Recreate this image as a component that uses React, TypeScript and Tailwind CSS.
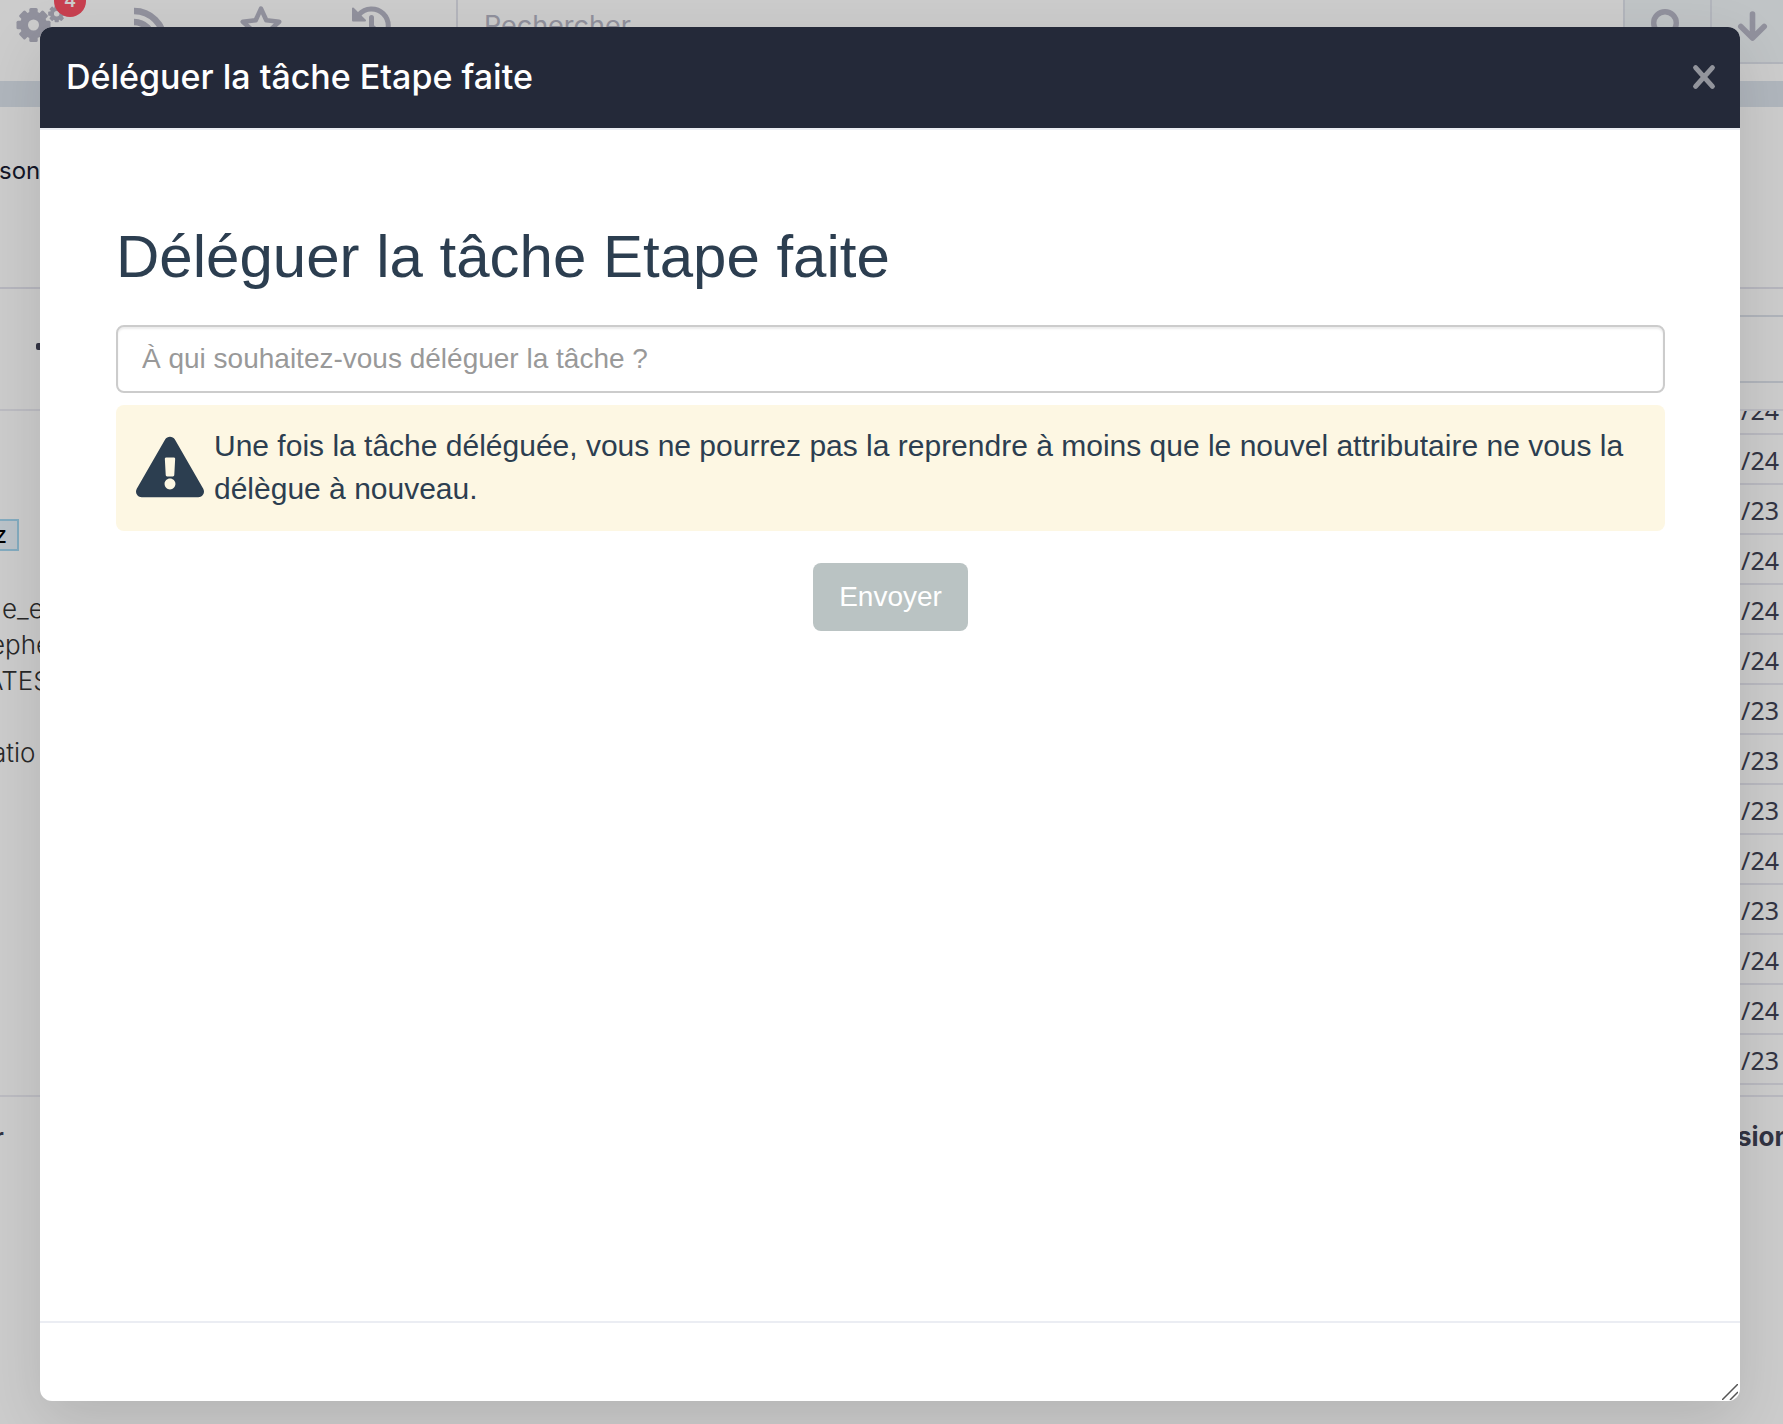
import { FaExclamationTriangle } from "react-icons/fa";

const years = ["24", "24", "23", "24", "24", "24", "23", "23", "23", "24", "23", "24", "24", "23"];
const details = [
  { text: "e_e", className: "pl-0.5" },
  { text: "ephe", className: "-ml-2.5" },
  { text: "ATES", className: "-ml-3.5" },
  { text: "", className: "" },
  { text: "atio", className: "-ml-2" },
];
const teeth = [0, 45, 90, 135, 180, 225, 270, 315];

function Gear() {
  return (
    <>
      <circle r="9.5" fill="none" stroke="currentColor" strokeWidth="8" />
      {teeth.map((angle) => (
        <rect key={angle} x="-4.2" y="-17" width="8.4" height="7" rx="1.5" fill="currentColor" transform={`rotate(${angle})`} />
      ))}
    </>
  );
}

function GearsIcon() {
  return (
    <svg width="50" height="40" viewBox="0 0 50 40" aria-hidden="true">
      <g transform="translate(17.5 21)"><Gear /></g>
      <g transform="translate(40.7 9.7) scale(0.5)"><Gear /></g>
    </svg>
  );
}

function FeedIcon() {
  return (
    <svg width="34" height="40" viewBox="0 0 34 40" fill="none" stroke="currentColor" strokeWidth="6.5" aria-hidden="true">
      <path d="M0 7a30 30 0 0 1 30 30M0 18a19 19 0 0 1 19 19" />
      <circle cx="4.5" cy="33" r="4.5" fill="currentColor" stroke="none" />
    </svg>
  );
}

function StarIcon() {
  return (
    <svg width="42" height="40" viewBox="0 0 42 40" fill="none" stroke="currentColor" strokeWidth="4.6" strokeLinejoin="round" aria-hidden="true">
      <path d="M21 4.6 26.3 16.3 39.2 17.7 29.6 26.4 32.2 38 21 32.6 9.8 38 12.4 26.4 2.8 17.7 15.7 16.3Z" />
    </svg>
  );
}

function HistoryIcon() {
  return (
    <svg width="42" height="40" viewBox="0 0 42 40" fill="none" stroke="currentColor" strokeWidth="5" aria-hidden="true">
      <path d="M9 10.5A16.8 16.8 0 1 1 9 33" />
      <path d="M3 4.5v12h12Z" fill="currentColor" strokeWidth="2" strokeLinejoin="round" />
      <path d="M21.5 13.5v9l6 5" strokeLinecap="round" />
    </svg>
  );
}

function SearchIcon() {
  return (
    <svg width="36" height="40" viewBox="0 0 36 40" fill="none" stroke="currentColor" strokeWidth="5.4" strokeLinecap="round" aria-hidden="true">
      <circle cx="16" cy="19" r="11.3" />
      <path d="m24 28 8 8" />
    </svg>
  );
}

function ArrowDownIcon() {
  return (
    <svg width="32" height="40" viewBox="0 0 32 40" fill="none" stroke="currentColor" strokeWidth="5.6" strokeLinecap="round" strokeLinejoin="round" aria-hidden="true">
      <path d="M16.5 10v22M4.8 22.5 16.5 34l11.7-11.5" />
    </svg>
  );
}

function CloseIcon() {
  return (
    <svg width="24" height="26" viewBox="0 0 24 26" fill="none" stroke="currentColor" strokeWidth="5" strokeLinecap="round" aria-hidden="true">
      <path d="m3.6 3.6 16.8 18.8M20.4 3.6 3.6 22.4" />
    </svg>
  );
}

function TopBar() {
  return (
    <header className="flex h-[81px] shrink-0 items-start text-[#b6b6c5]">
      <nav className="flex h-16 w-[456px] shrink-0 items-start pt-1 pl-4" aria-label="Raccourcis">
        <button className="relative" aria-label="Processus">
          <GearsIcon />
          <span className="absolute -top-[19px] left-[38px] flex size-8 items-center justify-center rounded-full bg-[#fb5164] text-lg font-semibold text-white">4</span>
        </button>
        <button className="ml-17" aria-label="Flux"><FeedIcon /></button>
        <button className="ml-18" aria-label="Favoris"><StarIcon /></button>
        <button className="ml-17" aria-label="Historique"><HistoryIcon /></button>
      </nav>
      <input
        type="search"
        aria-label="Rechercher"
        placeholder="Rechercher"
        className="h-16 min-w-0 flex-1 border-b-2 border-l-2 border-[#e1e3ec] pb-3 pl-[26px] text-[27px] placeholder:text-[#b6b6c5]"
      />
      <button className="flex h-16 w-[87px] items-start border-b-2 border-l-2 border-[#dfe3ec] bg-[#f0f5f8] pt-1 pl-6" aria-label="Lancer la recherche"><SearchIcon /></button>
      <button className="flex h-16 w-[73px] items-start border-b-2 border-l-2 border-[#dfe3ec] bg-[#f0f5f8] pt-1 pl-6" aria-label="Plus de critères"><ArrowDownIcon /></button>
    </header>
  );
}

function Background() {
  return (
    <div className="flex h-full flex-col overflow-hidden bg-white text-[#3f4254]">
      <TopBar />
      <div className="h-[26px] shrink-0 bg-[#dde4ed]" />
      <div className="flex flex-1 justify-between">
        <aside className="w-16 text-2xl whitespace-nowrap">
          <div className="h-[182px] border-b-2 border-[#e4e4ee] pt-12 text-[#181c32]"><p className="-ml-px">son</p></div>
          <div className="flex h-[122px] justify-end border-b-2 border-[#ebebf3] pt-[54px] pr-4"><span className="h-[7px] w-3 rounded-xs bg-[#3f4254]" /></div>
          <div className="h-[686px] border-b-2 border-[#ebebf3] pt-[108px] text-[#333]">
            <div className="flex h-8 w-[19px] items-end justify-end border-2 border-l-0 border-[#a6d8f0] bg-[#eaf4fc] pr-2.5 text-2xl leading-7 text-black">z</div>
            <div className="pt-10 text-[26px] font-light">
              {details.map((row, i) => (
                <p key={i} className="h-9 leading-9"><span className={row.className}>{row.text}</span></p>
              ))}
            </div>
          </div>
          <p className="-ml-1.5 pt-6 font-bold">r</p>
        </aside>
        <section className="flex w-16 flex-col">
          <div className="h-[182px] border-b-2 border-[#e4e4ee]" />
          <div className="h-7 border-b-2 border-[#dde2ea]" />
          <div className="h-[66px] border-b-2 border-[#dde2ea]" />
          <div className="h-7 border-b-2 border-[#ebebf3]" />
          <div className="h-[674px] overflow-hidden">
            <table className="-mt-[27px] w-full font-['Noto_Sans'] text-[25px]">
              <tbody>
                {years.map((year, i) => (
                  <tr key={i} className="h-[50px] border-b-2 border-[#e8e8f0]">
                    <td className="pt-0.5 pr-1 text-right leading-8">/{year}</td>
                  </tr>
                ))}
              </tbody>
            </table>
          </div>
          <div className="h-3 border-b-2 border-[#e8e8f0]" />
          <p className="pt-5 pl-[18px] text-[26px] font-bold">sion</p>
        </section>
      </div>
    </div>
  );
}

function DelegateForm() {
  return (
    <form className="flex-1 pt-[94px] pr-[75px] pl-19 font-['Liberation_Sans',sans-serif] text-[#2c3e50]" onSubmit={(e) => e.preventDefault()}>
      <h1 className="mb-[35px] text-[60px] leading-[66px]">Déléguer la tâche Etape faite</h1>
      <input
        type="text"
        aria-label="À qui souhaitez-vous déléguer la tâche ?"
        placeholder="À qui souhaitez-vous déléguer la tâche ?"
        className="block h-17 w-full rounded-lg border-2 border-[#ccc] px-6 text-[28px] shadow-[inset_0_2px_2px_rgba(0,0,0,0.075)] placeholder:text-[#999]"
      />
      <div role="alert" className="mt-3 flex items-center rounded-lg bg-[#fdf7e3] px-5 pt-[19px] pb-[21px] text-[30px] leading-[43px]">
        <FaExclamationTriangle size={68} className="mr-2.5 shrink-0" />
        <p>Une fois la tâche déléguée, vous ne pourrez pas la reprendre à moins que le nouvel attributaire ne vous la délègue à nouveau.</p>
      </div>
      <div className="mt-8 flex justify-center">
        <button type="submit" className="h-17 rounded-lg bg-[#bac3c3] px-[26px] text-[28px] text-white">Envoyer</button>
      </div>
    </form>
  );
}

export default function App() {
  return (
    <div className="relative h-screen overflow-hidden font-[Inter,sans-serif]">
      <Background />
      <div className="absolute inset-0 flex bg-black/20 pt-[27px] pr-[43px] pb-[23px] pl-10">
        <div role="dialog" aria-modal="true" aria-labelledby="dialog-title" className="relative flex min-w-0 flex-1 flex-col overflow-hidden rounded-xl bg-white shadow-[0_20px_60px_rgba(0,0,0,0.12)]">
          <div className="flex h-[103px] shrink-0 items-center justify-between border-b-2 border-[#ebedf3] bg-[#242939] pr-6 pb-0.5 pl-[26px]">
            <h2 id="dialog-title" className="text-[34px] font-medium text-white">Déléguer la tâche Etape faite</h2>
            <button aria-label="Fermer" className="text-[#92949c]"><CloseIcon /></button>
          </div>
          <DelegateForm />
          <div className="h-20 shrink-0 border-t-2 border-[#ebedf3]" />
          <svg className="absolute right-0.5 bottom-px" width="16" height="16" viewBox="0 0 16 16" stroke="#555" strokeWidth="1.5" aria-hidden="true">
            <path d="M0 16 16 0M8 16l8-8" />
          </svg>
        </div>
      </div>
    </div>
  );
}
